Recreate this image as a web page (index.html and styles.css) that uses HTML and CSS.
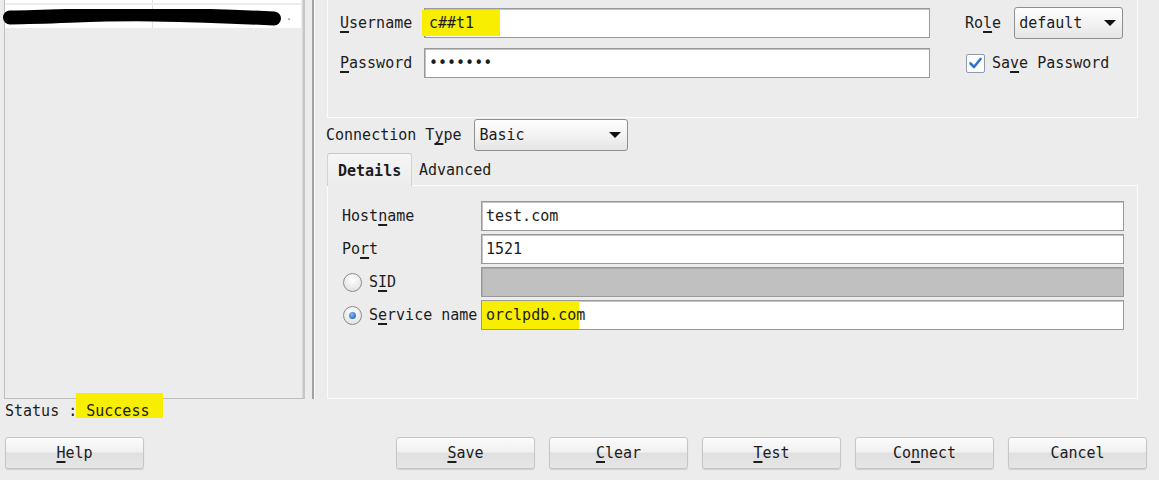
FILE: index.html
```html
<!DOCTYPE html>
<html>
<head>
<meta charset="utf-8">
<link rel="stylesheet" href="styles.css">
</head>
<body>
<div class="main">
  <div class="left">
    <div class="list">
      <div class="lrow"><div class="cell c1"></div><div class="cell"></div></div>
      <div class="lrow r2">
        <div class="cell c1"></div><div class="cell c2"><span class="dots">. .</span></div>
        <svg class="redact" width="285" height="20" viewBox="0 0 285 20"><path d="M8 8.5 C 60 8, 100 4.5, 150 5.5 S 240 8, 272 9.5" fill="none" stroke="#000" stroke-width="14" stroke-linecap="round"/></svg>
      </div>
    </div>
  </div>
  <div class="splitter"></div>
  <div class="right">
    <div class="topbox">
      <div class="frow">
        <span class="lbl"><u>U</u>sername</span>
        <div class="field wide"><span class="hl hl-user">c##t1</span></div>
        <span class="role-lbl">Ro<u>l</u>e</span>
        <div class="select role-sel"><span>default</span><i class="arrow"></i></div>
      </div>
      <div class="frow">
        <span class="lbl"><u>P</u>assword</span>
        <div class="field wide pw">•••••••</div>
        <span class="check"><svg width="19" height="19" viewBox="0 0 19 19"><rect x="0.5" y="0.5" width="18" height="18" rx="1.5" fill="#fdfdfd" stroke="#8e9aa8"/><path d="M4.5 9.5 L8 13 L14.5 5" fill="none" stroke="#2f74d0" stroke-width="2.6" stroke-linecap="round" stroke-linejoin="round"/></svg></span>
        <span class="check-lbl">Sa<u>v</u>e Password</span>
      </div>
    </div>
    <div class="ctrow">
      <span class="ct-lbl">Connection T<u>y</u>pe</span>
      <div class="select ct-sel"><span>Basic</span><i class="arrow"></i></div>
    </div>
    <div class="tabs">
      <div class="tab active">Details</div>
      <div class="tab">Advanced</div>
    </div>
    <div class="panel">
      <div class="prow"><span class="plbl">Host<u>n</u>ame</span><div class="field pfield">test.com</div></div>
      <div class="prow"><span class="plbl">Po<u>r</u>t</span><div class="field pfield">1521</div></div>
      <div class="prow"><span class="plbl"><span class="radio"></span>S<u>I</u>D</span><div class="field pfield disabled"></div></div>
      <div class="prow"><span class="plbl"><span class="radio on"></span>S<u>e</u>rvice name</span><div class="field pfield"><span class="hl hl-svc">orclpdb.com</span></div></div>
    </div>
  </div>
</div>
<div class="status">Status :<span class="hl hl-status">Success</span></div>
<div class="buttons">
  <button class="btn"><u>H</u>elp</button>
  <div class="spacer"></div>
  <button class="btn"><u>S</u>ave</button>
  <button class="btn"><u>C</u>lear</button>
  <button class="btn"><u>T</u>est</button>
  <button class="btn">Co<u>n</u>nect</button>
  <button class="btn">Cancel</button>
</div>
</body>
</html>
```
FILE: styles.css
```css
* { box-sizing: border-box; }
html, body {
  margin: 0;
  padding: 0;
  width: 1159px;
  height: 480px;
  overflow: hidden;
  background: #ececec;
  font-family: "DejaVu Sans Mono", "Liberation Mono", monospace;
  font-size: 15px;
  color: #1c1c1c;
}
u {
  text-decoration-thickness: 1.5px;
  text-underline-offset: 3px;
}
.main {
  display: flex;
  height: 399px;
}
.left {
  width: 305px;
  padding-left: 4px;
  display: flex;
  flex-direction: column;
}
.list {
  flex: 1;
  margin-top: -20px;
  border: 1px solid #bdbdbd;
  border-right: 2px solid #c6c6c6;
  box-shadow: inset -1px 0 0 #dadada;
  background: #ececec;
}
.lrow {
  display: flex;
  height: 22px;
  background: #fff;
  margin-bottom: 2px;
  margin-right: 2px;
}
.r2 { position: relative; height: 23px; }
.cell { flex: 1; }
.c1 { flex: 0 0 148px; border-right: 1px solid #e2e2e2; }
.c2 { display: flex; align-items: center; justify-content: flex-end; padding-right: 6px; }
.dots { color: #777; font-size: 10px; letter-spacing: 3px; }
.redact { position: absolute; left: -3px; top: 4px; }
.splitter {
  width: 3px;
  margin-left: 7px;
  background: #a2a2a2;
  border-right: 1px solid #f6f6f6;
}
.right {
  flex: 1;
  padding-left: 12px;
  padding-right: 21px;
  display: flex;
  flex-direction: column;
}
.topbox {
  margin-top: -10px;
  height: 128px;
  border: 1px solid #fbfbfb;
  padding: 16px 0 0 12px;
  display: flex;
  flex-direction: column;
  gap: 8px;
}
.frow {
  display: flex;
  align-items: center;
  height: 32px;
}
.lbl { width: 84px; }
.field {
  height: 30px;
  background: #fff;
  border: 1px solid #999;
  box-shadow: inset 1px 1px 0 #c4c4c4;
  display: flex;
  align-items: center;
  padding-left: 4px;
  white-space: nowrap;
}
.wide { width: 506px; }
.pw { letter-spacing: 0; }
.hl { background: #f7ee00; }
.hl-user {
  margin-left: -7px;
  height: 26px;
  line-height: 26px;
  padding: 0 26px 0 7px;
}
.role-lbl { margin-left: 35px; }
.select {
  height: 32px;
  border: 1px solid #8f8f8f;
  border-radius: 3px;
  background: linear-gradient(#fdfdfd, #f3f3f3 50%, #e4e4e4);
  display: flex;
  align-items: center;
  justify-content: space-between;
  padding: 0 6px 0 4px;
}
.role-sel { margin-left: 13px; width: 109px; }
.arrow {
  width: 0;
  height: 0;
  border-left: 6px solid transparent;
  border-right: 6px solid transparent;
  border-top: 6px solid #111;
}
.check { margin-left: 36px; display: flex; }
.check-lbl { margin-left: 7px; }
.ctrow {
  display: flex;
  align-items: center;
  height: 32px;
  margin-top: 1px;
  margin-left: -1px;
}
.ct-sel { margin-left: 13px; width: 154px; }
.tabs {
  display: flex;
  align-items: stretch;
  margin-top: 2px;
  height: 32px;
}
.tab {
  display: flex;
  align-items: center;
  padding: 2px 7px 0 7px;
}
.tab.active {
  position: relative;
  z-index: 1;
  width: 85px;
  padding-left: 10px;
  font-weight: bold;
  border: 1px solid #d2d2d2;
  border-bottom: none;
  border-top-color: #c8c8c8;
  border-radius: 3px 3px 0 0;
  background: linear-gradient(#f6f6f6, #ececec);
  margin-bottom: -1px;
}
.panel {
  flex: 1;
  border: 1px solid #fbfbfb;
  padding: 15px 13px 0 14px;
  display: flex;
  flex-direction: column;
  gap: 3px;
}
.prow {
  display: flex;
  align-items: center;
  height: 30px;
}
.plbl {
  width: 139px;
  display: flex;
  align-items: center;
  white-space: nowrap;
}
.pfield { flex: 1; }
.disabled { background: #c0c0c0; box-shadow: inset 1px 1px 0 #aaa; }
.radio {
  width: 19px;
  height: 19px;
  border-radius: 50%;
  border: 1px solid #8c8c8c;
  background: radial-gradient(circle at 50% 35%, #ffffff, #e6e6e6 70%, #d2d2d2);
  margin: 0 7px 0 1px;
  display: flex;
  align-items: center;
  justify-content: center;
}
.radio.on::after {
  content: "";
  width: 7px;
  height: 7px;
  border-radius: 50%;
  background: radial-gradient(circle at 40% 35%, #8fb8f0, #2e6fcf 70%);
}
.hl-svc {
  margin-left: -4px;
  width: 97px;
  height: 28px;
  line-height: 28px;
  padding-left: 4px;
  overflow: visible;
}
.status {
  display: flex;
  align-items: flex-start;
  height: 24px;
  line-height: 24px;
  padding-left: 5px;
}
.hl-status {
  margin-top: -6px;
  margin-left: -1px;
  height: 25px;
  padding: 6px 14px 0 10px;
  line-height: 24px;
}
.buttons {
  display: flex;
  margin-top: 14px;
  padding: 0 12px 0 5px;
  gap: 14px;
}
.spacer { flex: 1; }
.btn {
  width: 139px;
  height: 32px;
  font-family: inherit;
  font-size: 15px;
  color: #1c1c1c;
  border: 1px solid #c6c6c6;
  border-radius: 3px;
  background: linear-gradient(#fbfbfb, #f1f1f1 45%, #e0e0e0 52%, #e6e6e6);
  box-shadow: 0 1px 1px rgba(0,0,0,0.12);
  padding: 0;
}
```
